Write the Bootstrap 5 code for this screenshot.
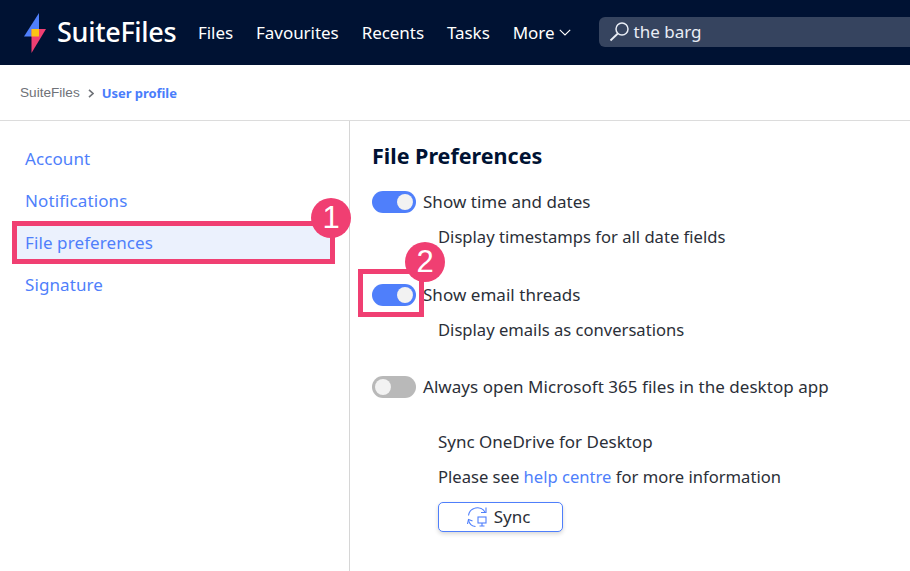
<!DOCTYPE html>
<html lang="en">
<head>
<meta charset="utf-8">
<title>User profile</title>
<link href="https://cdn.jsdelivr.net/npm/bootstrap@5.3.0/dist/css/bootstrap.min.css" rel="stylesheet">
<style>
html,body{height:571px;overflow:hidden}
body{font-family:"Noto Sans","Open Sans",sans-serif;color:#2b2f38;font-size:17px;position:relative;background:#fff}
.topbar{height:65px;background:#001233;padding-left:24px;overflow:hidden}
.logomark{margin-right:11px}
.brand{font-size:27px;font-weight:500;color:#fff;letter-spacing:-.3px;line-height:1;width:141px;padding-bottom:2px}
.toplinks{gap:23px;color:#fff}
.toplinks span{font-size:17px;color:#fff;white-space:nowrap;letter-spacing:-.05px}
.searchbox{margin-left:28px;width:400px;height:30px;background:#36445f;border-radius:6px;color:#e9edf5;padding-left:10px;margin-top:-1px;gap:5px}
.crumbs{height:56px;border-bottom:1px solid #dcdcdc;padding-left:20px;padding-top:2px;font-size:13.6px}
.crumbs .first{font-family:"Liberation Sans",sans-serif;color:#6f7278}
.crumbs .cur{color:#4a7dfb;font-weight:700;font-size:13px;letter-spacing:-.05px}
.mainrow{height:450px}
.sidebar{width:350px;flex:none;border-right:1px solid #d6d6d6;padding:17px 19px 0 12px}
.sideitem{height:42px;line-height:42px;padding-left:13px;color:#4f7ffb;font-size:17px;letter-spacing:.1px;text-decoration:none;display:block}
.sideitem.on{background:#ebf1fd}
.prefs{padding:19px 0 0 22px;flex:1}
.prefs h1{font-size:21.5px;font-weight:700;color:#001233;margin:0 0 19px;line-height:32px}
.swrow{height:22px;gap:7px;white-space:nowrap;letter-spacing:.04px}
.swrow .form-check-input{width:44px;height:22px;margin:0;float:none;border:0;background-color:#4f7ffb;box-shadow:none;border-radius:11px;flex:none;
 background-image:url("data:image/svg+xml,%3csvg xmlns='http://www.w3.org/2000/svg' viewBox='-4 -4 8 8'%3e%3ccircle r='2.9' fill='%23f2f2f2'/%3e%3c/svg%3e")}
.swrow .form-check-input:not(:checked){background-color:#b9b9b9}
.swrow.form-switch{padding-left:0;min-height:0;margin-bottom:0}
.swrow.swgap{margin-top:35px}
.swrow.swgap.last{margin-top:34px}
.hint{margin-left:66px;line-height:24px;white-space:nowrap;font-size:16.6px}
.hint.under{margin-top:12px}
.synctitle{margin-top:32px;font-size:17px}
.hint.tight{margin-top:11px}
.helplink{color:#4f7ffb;text-decoration:none}
.syncbtn{width:125px;height:30px;border:1px solid #4f7ffb;border-radius:5px;background:#fff;box-shadow:0 2px 4px rgba(0,0,0,.16);color:#2b2f38;font-size:17px;padding:0 4px 0 0;gap:7px;margin-left:66px;margin-top:13px}
.hilite{position:absolute;border:5px solid #f03f72}
.numdot{position:absolute;width:40px;height:40px;border-radius:50%;background:#f03f72;color:#fff;font-family:"Liberation Sans",sans-serif;font-size:31px;line-height:40px;text-align:center}
</style>
</head>
<body>
<nav class="topbar d-flex align-items-center">
  <svg width="22" height="40" viewBox="0 0 22 40" class="logomark flex-shrink-0">
    <polygon points="15,0 0,23.5 15,23.5" fill="#4f7ffb"/>
    <polygon points="7.5,16 22,16 7.5,40" fill="#f03f72"/>
    <rect x="7.5" y="16" width="7.5" height="7.5" fill="#fbc414"/>
  </svg>
  <div class="brand flex-shrink-0">SuiteFiles</div>
  <div class="toplinks d-flex align-items-center flex-shrink-0">
    <span>Files</span><span>Favourites</span><span>Recents</span><span>Tasks</span>
    <span class="d-flex align-items-center gap-1">More
      <svg width="12" height="7" viewBox="0 0 12 7"><path d="M.8.8 6 6 11.2.8" fill="none" stroke="#fff" stroke-width="1.1"/></svg></span>
  </div>
  <div class="searchbox d-flex align-items-center flex-shrink-0">
    <svg width="20" height="20" viewBox="0 0 20 20"><circle cx="13" cy="7" r="6" fill="none" stroke="#e9edf5" stroke-width="1.5"/><path d="M8.8 11.5 1.5 18.5" stroke="#e9edf5" stroke-width="1.8" fill="none"/></svg>
    <span>the barg</span>
  </div>
</nav>
<div class="crumbs d-flex align-items-center gap-2">
  <span class="first">SuiteFiles</span>
  <svg width="6" height="9" viewBox="0 0 6 9"><path d="M1 .8 5 4.5 1 8.2" fill="none" stroke="#6f7278" stroke-width="1.6"/></svg>
  <span class="cur">User profile</span>
</div>
<div class="mainrow d-flex">
  <aside class="sidebar">
    <a class="sideitem" href="#">Account</a>
    <a class="sideitem" href="#">Notifications</a>
    <a class="sideitem on" href="#">File preferences</a>
    <a class="sideitem" href="#">Signature</a>
  </aside>
  <main class="prefs">
    <h1>File Preferences</h1>
    <div class="form-check form-switch swrow d-flex align-items-center"><input class="form-check-input" type="checkbox" role="switch" checked><span>Show time and dates</span></div>
    <div class="hint under">Display timestamps for all date fields</div>
    <div class="form-check form-switch swrow swgap d-flex align-items-center"><input class="form-check-input" type="checkbox" role="switch" checked><span>Show email threads</span></div>
    <div class="hint under">Display emails as conversations</div>
    <div class="form-check form-switch swrow swgap last d-flex align-items-center"><input class="form-check-input" type="checkbox" role="switch"><span>Always open Microsoft 365 files in the desktop app</span></div>
    <div class="hint synctitle">Sync OneDrive for Desktop</div>
    <div class="hint tight">Please see <a class="helplink" href="#">help centre</a> for more information</div>
    <button class="btn syncbtn d-flex align-items-center justify-content-center" type="button">
      <svg width="20" height="20" viewBox="0 0 20 20" fill="none" stroke="#4f7ffb" stroke-width="1.1"><path d="M1.5 8.5A9 9 0 0 1 18 5"/><path d="M19 .5v5h-5"/><path d="M8.5 19.5A8 8 0 0 1 1.5 13"/><path d="M.5 17l1-4.5 4 1.5"/><rect x="11" y="10" width="8" height="6"/><path d="M15 16v3M12.5 19h5"/></svg>
      <span>Sync</span>
    </button>
  </main>
</div>
<div class="hilite" style="left:12px;top:221px;width:323px;height:43px"></div>
<div class="numdot" style="left:311px;top:198px">1</div>
<div class="hilite" style="left:358px;top:269px;width:66px;height:48px"></div>
<div class="numdot" style="left:405px;top:242px">2</div>
</body>
</html>
